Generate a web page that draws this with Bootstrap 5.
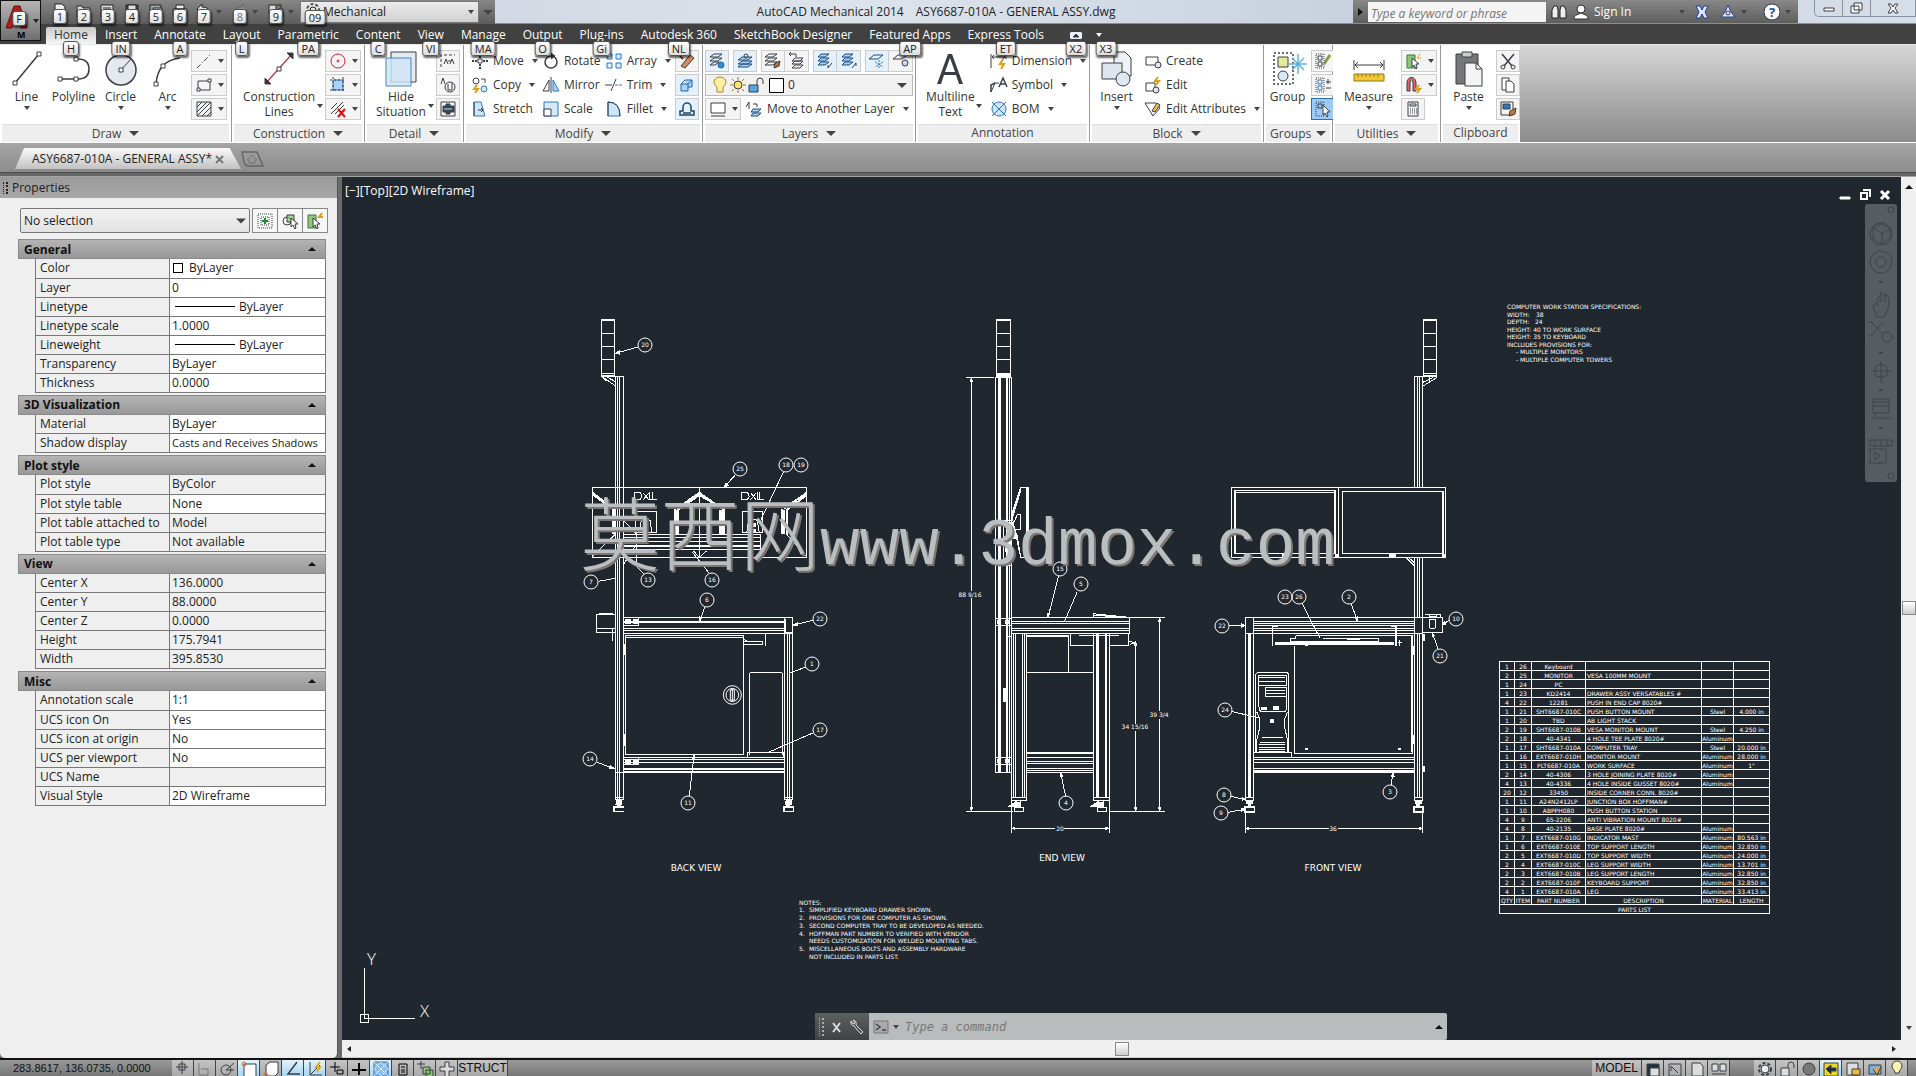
<!DOCTYPE html>
<html lang="en">
<head>
<meta charset="utf-8">
<meta name="viewport" content="width=device-width, initial-scale=1">
<title>AutoCAD Mechanical 2014 - ASY6687-010A - GENERAL ASSY.dwg</title>
<link href="https://cdn.jsdelivr.net/npm/bootstrap@5.3.0/dist/css/bootstrap.min.css" rel="stylesheet">
<style>
body{font:12px/16px "Open Sans","Noto Sans",sans-serif;color:#333;background:#6b6b6b}
button,input,select{font:inherit;color:inherit}
button{background:none;border:0;padding:0}
a{color:inherit;text-decoration:none}
svg{fill:none;stroke:#3a3e44;stroke-width:1;flex:none}
.ic{width:18px;height:18px}
.lg{width:38px;height:38px}
.dn{width:0;height:0;border:3px solid transparent;border-top:4px solid #444;border-bottom:0;flex:none}
.dn.wide{border-width:5px;border-top:5px solid #444;border-bottom:0}
.keytip{position:absolute;left:50%;transform:translateX(-50%);min-width:12px;height:15px;padding:0 3px;background:linear-gradient(#fff,#dcdcdc);border:1px solid #555;border-radius:3px;box-shadow:1px 2px 2px #0009;font-size:11px;line-height:13px;color:#222;text-align:center;z-index:5}
/* title bar */
.titlebar{height:24px;background:linear-gradient(90deg,#c3ccda,#dde3eb 45%,#c8d2df 70%,#d6dee8);border-bottom:1px solid #8a8f96}
.qat{background:linear-gradient(#868686,#5c5c5c);padding-left:48px;height:24px}
.qat button{width:24px;height:24px;position:relative}
.qat .keytip,.combo-wrap .keytip{top:9px}
.qat svg{stroke:#222;margin-top:-2px}
.qat .more{width:12px}
.combo-wrap{position:relative;width:179px;height:22px}
.combo-wrap select{appearance:none;width:100%;height:22px;padding:0 22px;border:1px solid #777;background:linear-gradient(#ececec,#cfcfcf);color:#222}
.combo-wrap .dn{position:absolute;right:5px;top:9px}
.appbtn{position:absolute;left:0;top:0;width:41px;height:41px;border:1px solid #111;background:linear-gradient(#b5b5b5,#6f6f6f);z-index:6}
.infobar{background:linear-gradient(#888,#5e5e5e);color:#fff;height:23px;width:445px}
.infobar input{width:178px;height:20px;border:0;background:#f4f4f4;font-style:italic;padding:4px 3px 0;color:#555}
.winbtns{width:102px;height:17px;margin-left:16px;border:1px solid #8791a0;border-top:0;border-radius:0 0 0 5px}
.winbtns button{border-right:1px solid #8791a0;width:28px;height:16px;line-height:0}
.winbtns button:last-child{flex:1;border:0}
/* menu tabs */
.menubar{height:20px;background:#414141;color:#fff;padding-left:46px;gap:1px}
.menubar .tab-link{position:relative;padding:2px 8px 0;line-height:18px;height:20px;color:#fff}
.menubar .tab-link.active{background:linear-gradient(#c9c9c9,#f5f5f5);color:#333;margin-top:3px;height:17px;padding-top:0;line-height:16px;border-radius:2px 2px 0 0}
.menubar .keytip{top:17px}
.menubar .active .keytip{top:14px}
/* ribbon */
.ribbon{height:99px;background:linear-gradient(#d6d6d6,#8b8b8b);border-bottom:1px solid #fff;border-top:1px solid #e8e8e8}
.panel{background:#fff;border-right:1px solid #999;height:97px;flex:none}
.panel-body{height:79px;padding:5px 3px 0}
.panel-name{height:18px;background:#eee;border-top:1px solid #ddd;margin:0 2px;color:#444}
.p-draw{width:232px}.p-cons{width:133px}.p-det{width:99px}.p-mod{width:239px}.p-lay{width:213px}.p-ann{width:174px}.p-blk{width:174px}.p-grp{width:69px}.p-uti{width:108px}.p-clp{width:79px}
.big{min-width:47px;height:72px;display:flex;flex-direction:column;align-items:center;position:relative;line-height:15px}
.big svg{margin-bottom:1px}
.big .dn{margin-top:2px}
.big.two{padding:0 8px}
.big.two .dn{position:absolute;right:0;top:52px}
.smallcol{display:flex;flex-direction:column;gap:2px}
.sb{width:24px;height:22px;border:1px solid #ccc;background:#f4f4f4;display:flex;align-items:center;justify-content:center}
.sb.split{width:36px;justify-content:space-around}
.sb.on{background:#9ccbf7;border-color:#2d6fb0}
.sb.blue{background:#e4f0fb}
.sb+.sb.join{border-left:0}
.tb{height:22px;display:flex;align-items:center;gap:4px;white-space:nowrap}
.tb .dn{margin-left:4px}
.laysel{width:208px;height:22px;border:1px solid #bbb;background:#f1f1f1;padding:0 5px}
.docs{height:29px;background:linear-gradient(#a5a5a5,#8c8c8c);padding-bottom:3px}
.doctab{margin-left:15px;width:226px;height:21px;background:linear-gradient(#fafafa,#c2c2c2);clip-path:polygon(0 100%,4% 0,95% 0,100% 100%);padding:0 17px;color:#222}
.strip{height:5px;background:#666;border-top:1px solid #4c4c4c;border-bottom:1px solid #a5a5a5}
/* properties palette */
.palette{width:338px;background:#efefef;border-right:1px solid #555;border-radius:0 0 5px 5px;color:#222}
.palette-title{height:21px;background:linear-gradient(#9b9b9b,#a6a6a6);padding-left:3px;gap:4px}
.grip{width:5px;height:12px;border:dotted #222;border-width:0 2px 0 1px;flex:none}
.grip.pale{border-color:#aaa;height:18px}
.selrow{padding:10px 9px 6px 20px;gap:3px}
.selrow select{appearance:none;flex:1;height:25px;border:1px solid #777;border-radius:2px;background:linear-gradient(#f2f2f2,#e2e2e2);padding:0 3px}
.selrow .pb{width:26px;height:25px;border:1px solid #888;background:#f6f6f6;margin-left:-1px}
.sec{margin:0 11px 2px 18px}
.sec-head{width:100%;height:20px;background:linear-gradient(#b4b4b4,#989898);border:1px solid #8a8a8a;font-weight:700;padding:0 9px 0 5px;line-height:17px;color:#111}
.up{width:0;height:0;border:4px solid transparent;border-bottom:4px solid #111;border-top:0}
.props{margin-left:17px;width:291px;table-layout:fixed}
.props th,.props td{height:19px;border:1px solid #777;padding:0 2px;font-weight:400;line-height:18px;overflow:hidden;white-space:nowrap}
.props th{width:134px;padding-left:4px}
.props td{background:#fff}
.props td.ro{background:#efefef}
.props td.long{font-size:11px}
.props tr:first-child>*{border-top:0}
.swatch{display:inline-block;width:10px;height:10px;border:1px solid #000;background:#fff;margin:0 6px 0 1px;vertical-align:-1px}
.lt{display:inline-block;width:60px;border-top:1px solid #000;margin:0 4px 0 3px;vertical-align:4px}
/* canvas */
.canvas{background:#21272e;position:relative;overflow:hidden}
.drawing{width:100%;height:100%;display:block;stroke:#fff}
.drawing .ln{shape-rendering:crispEdges}
.drawing .ln *{vector-effect:non-scaling-stroke}
.drawing .ln .heavy{stroke-width:2}
.drawing text{fill:#fff;stroke:none;font:6px "DejaVu Sans",sans-serif}
.drawing .mid{text-anchor:middle}
.drawing .vname{font-size:9px;text-anchor:middle}
.drawing .axis{font-size:17px;font-family:"Open Sans",sans-serif;font-weight:300}
.drawing .wm{font:66px "Liberation Mono","Noto Sans CJK SC",monospace;fill:#b9bec0;filter:drop-shadow(2px 2px 0 #7d7672)}
.drawing .wm .han{font:300 80px "Noto Sans CJK SC",sans-serif;fill:#b9bec0}
.viewlabel{position:absolute;left:3px;top:6px;color:#fff}
.mdi{position:absolute;right:10px;top:9px;gap:8px}
.navbar3d{position:absolute;right:4px;top:27px;width:32px;height:278px;background:#565c60;border-radius:3px}
.navbar3d svg{stroke:#3e454a;display:block}
.parts{position:absolute;right:131px;top:484px;width:270px;table-layout:fixed;color:#fff;font:6px/7px "DejaVu Sans",sans-serif}
.parts th,.parts td{border:1px solid #fff;height:9px;padding:0;text-align:center;font-weight:400;white-space:nowrap;overflow:hidden}
.parts td:nth-child(4){text-align:left;padding-left:1px}
.cmd{position:absolute;left:473px;bottom:0;width:632px;height:27px;background:#b9bcbc;border-radius:2px}
.cmd-l{width:54px;background:linear-gradient(#5d5f60,#3f4142)}
.cmd input{flex:1;border:0;background:none;font:italic 12px "DejaVu Sans Mono",monospace;outline:0}
.cmd input::placeholder{color:#777;opacity:1}
.hscroll{height:18px;background:#f0f0f0;border-bottom:1px solid #ccc}
.vscroll{width:15px;background:#f0f0f0}
.thumb{background:linear-gradient(#fff,#ccc);border:1px solid #888;width:14px;height:14px}
/* status bar */
.status{height:18px;border-top:2px solid #111;background:linear-gradient(#9a9a9a,#777);overflow:hidden;color:#111;align-items:flex-start}
.status .coords{width:172px;padding:1px 0 0 13px;font:11px/14px "Liberation Sans",sans-serif}
.status button{width:22px;height:18px;background:linear-gradient(#c4c4c4,#a5a5a5);border-right:1px solid #444;flex:none;display:block;line-height:0}
.status button svg{margin:0 auto;display:block}
.status button.on{background:linear-gradient(#e4f4fc,#9fd2ee)}
.status button.word{width:50px;height:16px;font:12px/16px "Liberation Sans",sans-serif}
</style>
</head>
<body class="vh-100 d-flex flex-column overflow-hidden">
<header class="position-relative">
 <div class="titlebar d-flex justify-content-between align-items-start">
  <button class="appbtn" aria-label="Application menu"><svg width="39" height="39" viewBox="0 0 39 39"><path d="M5 27L13 5h6l7 22h-6L16 13l-5 14z" fill="#b01c1c" stroke="#6d0d0d"/><path d="M32 18h6l-3 4z" fill="#222" stroke="none"/><text x="16" y="37" fill="#000" stroke="none" font-size="9" font-weight="700">M</text></svg><span class="keytip" style="left:18px;top:10px">F</span></button>
  <div class="qat d-flex align-items-center">
   <button aria-label="New"><svg class="ic" viewBox="0 0 18 18"><path d="M4 2h7l3 3v11H4z" fill="#eee"/></svg><span class="keytip">1</span></button>
   <button aria-label="Open"><svg class="ic" viewBox="0 0 18 18"><path d="M2 4h5l1 2h7v9H2z" fill="#ddd"/></svg><span class="keytip">2</span></button>
   <button aria-label="Open from cloud"><svg class="ic" viewBox="0 0 18 18"><path d="M2 3h12v12H2z" fill="#ddd"/><path d="M4 6h8"/></svg><span class="keytip">3</span></button>
   <button aria-label="Save"><svg class="ic" viewBox="0 0 18 18"><path d="M3 3h12v12H3z" fill="#49516b"/><path d="M5 3h8v5H5z" fill="#ddd"/></svg><span class="keytip">4</span></button>
   <button aria-label="Save as"><svg class="ic" viewBox="0 0 18 18"><path d="M3 3h11v11H3z" fill="#9aa"/><path d="M6 6h9v9H6z" fill="#ccd"/></svg><span class="keytip">5</span></button>
   <button aria-label="Plot"><svg class="ic" viewBox="0 0 18 18"><path d="M5 3h8v4H5zM2 7h14v6H2z" fill="#eee"/></svg><span class="keytip">6</span></button>
   <button aria-label="Undo"><svg class="ic" viewBox="0 0 18 18"><path d="M2 7l5-5v3c6 0 8 3 8 8-2-3-4-4-8-4v3z" fill="#ddd"/></svg><span class="keytip">7</span></button>
   <button class="more" aria-label="Undo list"><span class="dn d-block"></span></button>
   <button aria-label="Redo"><svg class="ic" viewBox="0 0 18 18"><path d="M16 7l-5-5v3C5 5 3 8 3 13c2-3 4-4 8-4v3z" fill="#888" stroke="#666"/></svg><span class="keytip text-secondary">8</span></button>
   <button class="more" aria-label="Redo list"><span class="dn d-block"></span></button>
   <button aria-label="Workspace tools"><svg class="ic" viewBox="0 0 18 18"><path d="M2 3h7v8H2zM11 7h5v8h-5z" fill="#ddd"/><path d="M10 3h4v3"/></svg><span class="keytip">9</span></button>
   <button class="more" aria-label="More"><span class="dn d-block"></span></button>
   <div class="combo-wrap"><select aria-label="Workspace"><option>Mechanical</option></select><svg class="ic position-absolute start-0 top-0 ms-1 mt-0" viewBox="0 0 18 18"><circle cx="9" cy="9" r="6" stroke-dasharray="3 2" stroke-width="2" stroke="#555"/><circle cx="9" cy="9" r="3"/></svg><span class="keytip" style="left:15px">09</span><span class="dn"></span></div>
   <button class="more ms-1" aria-label="Customize toolbar"><span class="dn wide d-block"></span></button>
  </div>
  <div class="d-flex flex-grow-1 justify-content-center text-dark pt-1 ps-4"><span>AutoCAD Mechanical 2014</span><span class="ms-2 ps-1">ASY6687-010A - GENERAL ASSY.dwg</span></div>
  <div class="infobar d-flex align-items-center">
   <button class="px-1" aria-label="Collapse"><svg width="7" height="10" viewBox="0 0 7 10"><path d="M1 1l5 4-5 4z" fill="#111" stroke="none"/></svg></button>
   <input type="text" placeholder="Type a keyword or phrase" aria-label="Search">
   <button class="ms-1" aria-label="Find"><svg class="ic" viewBox="0 0 18 18"><path d="M2 15V7l2-4h3l1 4v8zM10 15V7l1-4h3l2 4v8z" fill="#eee" stroke="#222"/></svg></button>
   <button class="d-flex align-items-center gap-1 ms-1"><svg class="ic" viewBox="0 0 18 18"><circle cx="9" cy="6" r="4" fill="#fff" stroke="#333"/><path d="M2 16c0-4 3-4 7-6 4 2 7 2 7 6z" fill="#fff" stroke="#333"/></svg><span>Sign In</span></button>
   <button class="ms-5" aria-label="Account menu"><span class="dn d-block"></span></button>
   <button class="ms-2" aria-label="Exchange"><svg class="ic" viewBox="0 0 18 18"><path d="M3 3h4l2 4 2-4h4l-3 6 3 6h-4l-2-4-2 4H3l3-6z" fill="#dce6ff" stroke="#23408e"/></svg></button>
   <button class="ms-2 d-flex align-items-center gap-1" aria-label="Community"><svg class="ic" viewBox="0 0 18 18"><path d="M9 2l3 7 4 5H2l4-5z" fill="#dce6ff" stroke="#23408e"/><circle cx="9" cy="10" r="2"/></svg><span class="dn"></span></button>
   <button class="ms-3 d-flex align-items-center gap-1" aria-label="Help"><svg class="ic" viewBox="0 0 18 18"><circle cx="9" cy="9" r="8" fill="#fff" stroke="#345"/><text x="6" y="14" fill="#1b4fa0" stroke="none" font-size="13" font-weight="700">?</text></svg><span class="dn"></span></button>
  </div>
  <div class="winbtns d-flex"><button aria-label="Minimize"><svg width="12" height="12" viewBox="0 0 12 12"><path d="M1 6h10v3H1z" fill="#fff"/></svg></button><button aria-label="Restore"><svg width="14" height="12" viewBox="0 0 14 12"><path d="M4 1h8v7H4zM1 4h8v7H1z" fill="#fff"/></svg></button><button aria-label="Close"><svg width="12" height="11" viewBox="0 0 12 11"><path d="M1 1h3l2 3 2-3h3L8 5l3 5H8L6 7l-2 3H1l3-5z" fill="#fff"/></svg></button></div>
 </div>
 <nav class="menubar d-flex">
  <a href="#" class="tab-link active">Home<span class="keytip">H</span></a><a href="#" class="tab-link">Insert<span class="keytip">IN</span></a><a href="#" class="tab-link">Annotate<span class="keytip">A</span></a><a href="#" class="tab-link">Layout<span class="keytip">L</span></a><a href="#" class="tab-link">Parametric<span class="keytip">PA</span></a><a href="#" class="tab-link">Content<span class="keytip">C</span></a><a href="#" class="tab-link">View<span class="keytip">VI</span></a><a href="#" class="tab-link">Manage<span class="keytip">MA</span></a><a href="#" class="tab-link">Output<span class="keytip">O</span></a><a href="#" class="tab-link">Plug-ins<span class="keytip">Gi</span></a><a href="#" class="tab-link">Autodesk 360<span class="keytip">NL</span></a><a href="#" class="tab-link">SketchBook Designer</a><a href="#" class="tab-link">Featured Apps<span class="keytip">AP</span></a><a href="#" class="tab-link">Express Tools<span class="keytip">ET</span></a>
  <button class="tab-link ms-2" aria-label="Minimize ribbon"><svg width="14" height="9" viewBox="0 0 14 9"><rect x=".5" y=".5" width="13" height="8" rx="2" fill="#eef"/><path d="M4 6l3-3 3 3z" fill="#333"/></svg><span class="keytip">X2</span></button>
  <button class="tab-link px-1" aria-label="Ribbon options"><span class="dn d-block" style="border-top-color:#fff"></span><span class="keytip" style="left:14px">X3</span></button>
 </nav>
</header>
<section class="ribbon d-flex">
 <div class="panel p-draw"><div class="panel-body d-flex">
  <button class="big"><svg class="lg" viewBox="0 0 38 38"><path d="M7 33L31 4" stroke-width="1.5"/><path d="M5 31h4v4H5zM29 2h4v4h-4z" fill="#fff"/></svg>Line<span class="dn"></span></button>
  <button class="big"><svg class="lg" viewBox="0 0 38 38"><path d="M5 29h18q11 0 11-10T23 9h-2" stroke-width="1.5"/><path d="M3 27h4v4H3zM19 27h4v4h-4zM19 7h4v4h-4z" fill="#fff"/></svg>Polyline</button>
  <button class="big"><svg class="lg" viewBox="0 0 38 38"><circle cx="19" cy="20" r="15" fill="#e4e8ef" stroke-width="1.5"/><path d="M19 20L29 9"/><path d="M17 18h4v4h-4z" fill="#fff"/></svg>Circle<span class="dn"></span></button>
  <button class="big"><svg class="lg" viewBox="0 0 38 38"><path d="M7 34C8 20 14 10 31 8" stroke-width="1.5"/><path d="M5 32h4v4H5zM12 14h4v4h-4z" fill="#fff"/></svg>Arc<span class="dn"></span></button>
  <div class="smallcol"><button class="sb split" aria-label="Centerline"><svg class="ic" viewBox="0 0 18 18"><path d="M2 16L16 2" stroke-dasharray="5 2 1 2"/></svg><span class="dn"></span></button><button class="sb split" aria-label="Rectangle"><svg class="ic" viewBox="0 0 18 18"><path d="M3 5h12v9H3z"/><path d="M2 12h3v3H2zM13 3h3v3h-3z" fill="#fff"/></svg><span class="dn"></span></button><button class="sb split" aria-label="Hatch"><svg class="ic" viewBox="0 0 18 18"><path d="M2 2h14v14H2zM2 7l5-5M2 12L12 2M2 16L16 2M7 16l9-9M12 16l4-4"/></svg><span class="dn"></span></button></div>
 </div><div class="panel-name d-flex justify-content-center align-items-center gap-2">Draw<span class="dn wide"></span></div></div>
 <div class="panel p-cons"><div class="panel-body d-flex justify-content-between">
  <button class="big two"><svg class="lg" viewBox="0 0 38 38"><path d="M6 33L32 4" stroke="#b2474f" stroke-width="1.5"/><path d="M5 34v-6l6 6zM33 3v6l-6-6z" fill="#333"/><path d="M17 17h4v4h-4z" fill="#fff"/></svg>Construction<br>Lines<span class="dn"></span></button>
  <div class="smallcol"><button class="sb split" aria-label="Construction circle"><svg class="ic" viewBox="0 0 18 18"><circle cx="9" cy="9" r="7" stroke="#c23"/><circle cx="9" cy="9" r="1" stroke="#c23"/></svg><span class="dn"></span></button><button class="sb split" aria-label="Auto construction"><svg class="ic" viewBox="0 0 18 18"><path d="M4 4h10v10H4z" fill="#a9d2f5" stroke="#2b77c0"/><path d="M1 4h16M4 1v16M14 1v16M1 14h16" stroke-dasharray="2 2"/></svg><span class="dn"></span></button><button class="sb split" aria-label="Erase construction"><svg class="ic" viewBox="0 0 18 18"><path d="M2 14L14 2M2 9l6-6M6 14l9-9"/><path d="M9 9l7 8M16 9l-7 8" stroke="#d11" stroke-width="2"/></svg><span class="dn"></span></button></div>
 </div><div class="panel-name d-flex justify-content-center align-items-center gap-2">Construction<span class="dn wide"></span></div></div>
 <div class="panel p-det"><div class="panel-body d-flex justify-content-between">
  <button class="big two"><svg class="lg" viewBox="0 0 38 38"><path d="M9 2h25v30H9z" fill="#e3eaf2"/><path d="M4 8h25v28H4z" fill="#cfe3f5" fill-opacity=".8" stroke="#4a86bd"/></svg>Hide<br>Situation<span class="dn"></span></button>
  <div class="smallcol"><button class="sb" aria-label="Section"><svg class="ic" viewBox="0 0 18 18"><path d="M2 15V3h14" stroke-dasharray="3 2"/><path d="M5 12l2-5 2 5M11 12l2-5 2 5M9 9h3"/></svg></button><button class="sb" aria-label="Detail view"><svg class="ic" viewBox="0 0 18 18"><circle cx="11" cy="11" r="5"/><path d="M2 8l2-6 2 6M9 8v6h4V7"/></svg></button><button class="sb" aria-label="Breakout"><svg class="ic" viewBox="0 0 18 18"><path d="M2 2h14v14H2z"/><path d="M4 6h3v-2h4v2h4v6h-4v2H7v-2H4z" fill="#345"/><path d="M5 9h8" stroke="#cde"/></svg></button></div>
 </div><div class="panel-name d-flex justify-content-center align-items-center gap-2">Detail<span class="dn wide"></span></div></div>
 <div class="panel p-mod"><div class="panel-body d-flex justify-content-between">
  <div class="smallcol ms-1"><button class="tb"><svg class="ic" viewBox="0 0 18 18"><path d="M9 1v5M9 12v5M1 9h5M12 9h5" stroke-width="2" stroke-dasharray="2 1"/><path d="M7 7h4v4H7z"/></svg>Move<span class="dn"></span></button><button class="tb"><svg class="ic" viewBox="0 0 18 18"><circle cx="5" cy="5" r="3"/><circle cx="13" cy="13" r="3" fill="#cfe6fa" stroke="#2b77c0"/><path d="M10 3h4v4"/><path d="M6 9l-3 4h4l-3 4" stroke="#e79b12" stroke-width="2"/></svg>Copy<span class="dn"></span></button><button class="tb"><svg class="ic" viewBox="0 0 18 18"><path d="M3 2h7l4 14H3z" fill="#cfe6fa" stroke="#2b77c0"/><path d="M3 2v14M7 10h5m-2-2l2 2-2 2"/></svg>Stretch</button></div>
  <div class="smallcol"><button class="tb"><svg class="ic" viewBox="0 0 18 18"><circle cx="9" cy="10" r="6" stroke-width="1.5"/><path d="M9 1l4 3-4 3" fill="#333"/></svg>Rotate</button><button class="tb"><svg class="ic" viewBox="0 0 18 18"><path d="M7 4v11H1z"/><path d="M11 4v11h6z" fill="#a9d2f5" stroke="#2b77c0"/><path d="M9 1v16"/></svg>Mirror</button><button class="tb"><svg class="ic" viewBox="0 0 18 18"><path d="M2 2h14v14H2z" fill="#d5e9fa" stroke="#2b77c0"/><path d="M2 9h7v7H2z" fill="#fff"/></svg>Scale</button></div>
  <div class="smallcol"><button class="tb"><svg class="ic" viewBox="0 0 18 18"><path d="M2 2h5v5H2zM11 2h5v5h-5zM2 11h5v5H2zM11 11h5v5h-5z" fill="#e0effb" stroke="#2b77c0"/></svg>Array<span class="dn"></span></button><button class="tb"><svg class="ic" viewBox="0 0 18 18"><path d="M6 15L11 3M0 9h7"/><path d="M10 9h8" stroke="#2b77c0" stroke-dasharray="3 1"/></svg>Trim<span class="dn"></span></button><button class="tb"><svg class="ic" viewBox="0 0 18 18"><path d="M3 2q12 0 12 14H3z" fill="#cfe6fa" stroke="#2b77c0"/><path d="M3 16V2q12 0 12 14"/></svg>Fillet<span class="dn"></span></button></div>
  <div class="smallcol"><button class="sb" aria-label="Erase"><svg class="ic" viewBox="0 0 18 18"><path d="M3 14L12 3l4 3-9 10z" fill="#d88a62"/><path d="M1 3l4 4" stroke="#c22" stroke-width="2"/></svg></button><button class="sb blue" aria-label="Explode"><svg class="ic" viewBox="0 0 18 18"><path d="M3 8h7v7H3zM7 4h7v7h-4M3 8l4-4M10 8l4-4" fill="#a9d2f5" stroke="#1f64a8"/></svg></button><button class="sb blue" aria-label="Offset"><svg class="ic" viewBox="0 0 18 18"><path d="M2 15h14v-4h-3V7a4 4 0 0 0-8 0v4H2zM5 13h8" stroke-width="1.5" stroke="#1f4468"/></svg></button></div>
 </div><div class="panel-name d-flex justify-content-center align-items-center gap-2">Modify<span class="dn wide"></span></div></div>
 <div class="panel p-lay"><div class="panel-body px-0 d-flex justify-content-center"><div class="smallcol">
  <div class="d-flex justify-content-between">
   <button class="sb blue" aria-label="Layer properties"><svg class="ic" viewBox="0 0 18 18"><path d="M6 2h8l-4 3H2zM6 6h8l-4 3H2zM6 10h5l-4 3H2z"/><circle cx="13" cy="13" r="3" fill="#3a8ad0" stroke="#1f64a8"/></svg></button>
   <button class="sb blue" aria-label="Layer match"><svg class="ic" viewBox="0 0 18 18"><path d="M6 5h10l-4 3H2zM6 9h10l-4 3H2zM6 12h10l-4 3H2z" fill="#a9d2f5" stroke="#1f4d80"/><circle cx="10" cy="4" r="2"/></svg></button>
   <div class="d-flex"><button class="sb" aria-label="Make current"><svg class="ic" viewBox="0 0 18 18"><path d="M5 2h8l-4 3H1zM5 6h8l-4 3H1zM5 10h8l-4 3H1z"/><path d="M10 16l1-5 5-2-1 5z" fill="#b5722a"/></svg></button><button class="sb join" aria-label="Previous layer"><svg class="ic" viewBox="0 0 18 18"><path d="M7 6h8l-3 3H4zM7 9h8l-3 3H4zM7 13h8l-3 3H4zM1 2h7v3M1 2l2-2M1 2l2 2"/></svg></button></div>
   <div class="d-flex"><button class="sb blue" aria-label="Isolate"><svg class="ic" viewBox="0 0 18 18"><path d="M5 2h8l-4 3H2zM5 6h8l-4 3H2zM5 10h8l-4 3H2z" fill="#a9d2f5" stroke="#1f4d80"/><path d="M16 11l-4 5v-3"/></svg></button><button class="sb join blue" aria-label="Unisolate"><svg class="ic" viewBox="0 0 18 18"><path d="M5 2h8l-4 3H2zM5 6h8l-4 3H2zM5 10h8l-4 3H2z" fill="#a9d2f5" stroke="#1f4d80"/><path d="M12 16l4-5v3"/></svg></button></div>
   <div class="d-flex"><button class="sb blue" aria-label="Freeze"><svg class="ic" viewBox="0 0 18 18"><path d="M6 3h9l-5 4H1z" stroke="#1f4d80"/><path d="M11 8v9M7 10l8 5M15 10l-8 5" stroke="#2b77c0" stroke-dasharray="2 1"/></svg></button><button class="sb join" aria-label="Layer off"><svg class="ic" viewBox="0 0 18 18"><path d="M6 3h9l-5 4H1z"/><circle cx="13" cy="11" r="3" fill="#c9d8f5"/></svg></button></div>
  </div>
  <button class="laysel d-flex align-items-center"><svg class="ic" viewBox="0 0 18 18"><path d="M6 12c0-2-3-3-3-6a6 5 0 0 1 12 0c0 3-3 4-3 6v4H6z" fill="#fff0a0" stroke="#a8862a"/></svg><svg class="ic" viewBox="0 0 18 18"><circle cx="9" cy="9" r="4" fill="#fbe373"/><path d="M9 1v3M9 14v3M1 9h3M14 9h3M3 3l2 2M13 13l2 2M3 15l2-2M13 5l2-2" stroke="#a67b12"/></svg><svg class="ic" viewBox="0 0 18 18"><path d="M2 9h9v7H2z" fill="#58a5e0"/><path d="M10 9V5a3 3 0 0 1 6 0v3"/></svg><svg class="ms-1" width="15" height="15" viewBox="0 0 15 15"><path d="M.5.5h14v14H.5z" fill="#fff" stroke="#000"/></svg><span class="ms-1">0</span><span class="dn wide ms-auto"></span></button>
  <div class="d-flex gap-1"><button class="sb split" aria-label="Layer group"><svg class="ic" viewBox="0 0 18 18"><path d="M2 3h14v10H2zM2 16h14" fill="#fff"/></svg><span class="dn"></span></button><button class="tb"><svg class="ic" viewBox="0 0 18 18"><path d="M1 7l3-5v7M8 4h4v3"/><path d="M8 9h8l-3 3H6zM8 13h8l-3 3H6z" fill="#a9d2f5" stroke="#1f4d80"/></svg>Move to Another Layer<span class="dn"></span></button></div>
 </div></div><div class="panel-name d-flex justify-content-center align-items-center gap-2">Layers<span class="dn wide"></span></div></div>
 <div class="panel p-ann"><div class="panel-body d-flex gap-2">
  <button class="big two"><svg class="lg" viewBox="0 0 38 38"><path d="M6 34L17 4h4l11 30h-4l-3-9H13l-3 9zM14 22h10L19 8z" fill="#3a3e44" fill-rule="evenodd" stroke="none"/></svg>Multiline<br>Text<span class="dn"></span></button>
  <div class="smallcol"><button class="tb"><svg class="ic" viewBox="0 0 18 18"><path d="M1 2v14M16 2v5M2 5h13M4 3L2 5l2 2M13 3l2 2-2 2"/><path d="M13 7l-3 5h4l-3 5" stroke="#e79b12" stroke-width="2"/></svg>Dimension<span class="dn"></span></button><button class="tb"><svg class="ic" viewBox="0 0 18 18"><path d="M1 16V9l4-2M9 11l4-9 4 9M10 8h5" stroke-width="1.5"/><path d="M1 16l4-9h4"/></svg>Symbol<span class="dn"></span></button><button class="tb"><svg class="ic" viewBox="0 0 18 18"><circle cx="9" cy="9" r="7" fill="#cfe6fa" stroke="#2b77c0"/><path d="M2 2l14 14M16 2L2 16" stroke="#2b77c0"/></svg>BOM<span class="dn"></span></button></div>
 </div><div class="panel-name text-center">Annotation</div></div>
 <div class="panel p-blk"><div class="panel-body d-flex">
  <button class="big"><svg class="lg" viewBox="0 0 38 38"><path d="M16 2h11l6 6v18H16z" fill="#eef1f5"/><path d="M4 13h20v16H4z" fill="#dfe5ec"/><circle cx="25" cy="29" r="7" fill="#dfe8f2"/></svg>Insert<span class="dn"></span></button>
  <div class="smallcol ms-1"><button class="tb"><svg class="ic" viewBox="0 0 18 18"><path d="M2 5h12v8H2z"/><circle cx="14" cy="13" r="3" fill="#dfe5ec"/></svg>Create</button><button class="tb"><svg class="ic" viewBox="0 0 18 18"><path d="M2 7h9v8H2z"/><circle cx="12" cy="14" r="3" fill="#dfe5ec"/><path d="M14 1l-3 4h4l-3 4" stroke="#e79b12" stroke-width="2"/></svg>Edit</button><button class="tb"><svg class="ic" viewBox="0 0 18 18"><path d="M1 3l8 13 7-8-4-5z"/><path d="M8 11l5-8 3 2-5 7z" fill="#f1c14c"/></svg>Edit Attributes<span class="dn"></span></button></div>
 </div><div class="panel-name d-flex justify-content-center align-items-center gap-2">Block<span class="dn wide"></span></div></div>
 <div class="panel p-grp"><div class="panel-body px-0 d-flex justify-content-between">
  <button class="big"><svg class="lg" viewBox="0 0 38 38"><path d="M5 3h19v31H5z" stroke-dasharray="2 2" stroke-width="1.5"/><path d="M9 7h10v10H9z" fill="#e4ea9c"/><circle cx="14" cy="26" r="5" fill="#d6e9f8"/><path d="M29 4v20M20 14h18M23 8l12 12M35 8L23 20" stroke="#5fb3ea" stroke-width="1.5"/></svg>Group</button>
  <div class="smallcol"><button class="sb" aria-label="Group edit"><svg class="ic" viewBox="0 0 18 18"><path d="M2 2h8v14H2z" stroke-dasharray="1 1"/><path d="M4 4h4v4H4zM4 10h4v4H4z"/><path d="M10 12l6-9" stroke="#8a9a4a" stroke-width="3"/></svg></button><button class="sb" aria-label="Add or remove"><svg class="ic" viewBox="0 0 18 18"><path d="M2 2h8v14H2z" stroke-dasharray="1 1"/><path d="M4 4h4v4H4zM4 10h4v4H4z" stroke="#2b77c0"/><path d="M12 6h5M14 3v5M12 12h5"/></svg></button><button class="sb on" aria-label="Group selection"><svg class="ic" viewBox="0 0 18 18"><path d="M2 2h8v14H2z" stroke-dasharray="1 1"/><path d="M4 4h4v4H4z"/><path d="M9 5v10l2-2 2 4 1-1-1-4h3z" fill="#fff"/></svg></button></div>
 </div><div class="panel-name px-1 d-flex justify-content-between align-items-center">Groups<span class="dn wide"></span></div></div>
 <div class="panel p-uti"><div class="panel-body d-flex justify-content-between">
  <button class="big flex-fill"><svg class="lg" viewBox="0 0 38 38"><path d="M4 10v10M34 10v10M5 15h28M8 12l-3 3 3 3M30 12l3 3-3 3"/><path d="M4 24h30v7H4z" fill="#f0c932" stroke="#94761a"/><path d="M8 24v3M12 24v3M16 24v3M20 24v3M24 24v3M28 24v3" stroke="#94761a"/></svg>Measure<span class="dn"></span></button>
  <div class="smallcol"><button class="sb split" aria-label="Quick select"><svg class="ic" viewBox="0 0 18 18"><path d="M2 3h8v13H2z" fill="#8cc878" stroke="#3c7a35"/><path d="M7 6v9l2-2 2 4 1-1-1-4h3z" fill="#fff"/><path d="M15 2l-3 4h4" stroke="#e79b12"/></svg><span class="dn"></span></button><button class="sb split" aria-label="Power snap"><svg class="ic" viewBox="0 0 18 18"><path d="M2 15V7a4 5 0 0 1 9 0v8H8V7a1 2 0 0 0-3 0v8z" fill="#d66"/><path d="M14 9l-3 4h4l-3 4" stroke="#e79b12" stroke-width="2"/></svg><span class="dn"></span></button><button class="sb" aria-label="Calculator"><svg class="ic" viewBox="0 0 18 18"><path d="M4 2h10v14H4zM6 4h6v2H6z"/><path d="M6 9h7M6 11h7M6 13h7" stroke-dasharray="1 1"/></svg></button></div>
 </div><div class="panel-name d-flex justify-content-center align-items-center gap-2">Utilities<span class="dn wide"></span></div></div>
 <div class="panel p-clp border-0"><div class="panel-body px-0 d-flex justify-content-between">
  <button class="big flex-fill"><svg class="lg" viewBox="0 0 38 38"><path d="M6 4h22v30H6z" fill="#777"/><path d="M12 2h10v5H12z" fill="#ccc"/><path d="M15 13h11l6 6v17H15z" fill="#f4f4f4"/><path d="M26 13v6h6"/></svg>Paste<span class="dn"></span></button>
  <div class="smallcol"><button class="sb" aria-label="Cut"><svg class="ic" viewBox="0 0 18 18"><path d="M3 2l10 12M15 2L5 14" stroke-width="1.5"/><circle cx="4" cy="15" r="2"/><circle cx="14" cy="15" r="2"/></svg></button><button class="sb" aria-label="Copy clip"><svg class="ic" viewBox="0 0 18 18"><path d="M3 2h7v12H3z" fill="#fff"/><path d="M7 5h5l3 3v8H7z" fill="#fff"/></svg></button><button class="sb" aria-label="Match properties"><svg class="ic" viewBox="0 0 18 18"><path d="M2 2h12v13H2z"/><path d="M4 4h7v5H4z" fill="#2b77c0"/><path d="M10 16l1-5 6-3-1 6z" fill="#c97835"/></svg></button></div>
 </div><div class="panel-name text-center">Clipboard</div></div>
</section>
<div class="docs d-flex align-items-end"><div class="doctab d-flex align-items-center justify-content-between"><span>ASY6687-010A - GENERAL ASSY*</span><button aria-label="Close drawing"><svg width="9" height="9" viewBox="0 0 9 9"><path d="M1 1l7 7M8 1L1 8" stroke="#777" stroke-width="2"/></svg></button></div><button aria-label="New tab"><svg width="24" height="20" viewBox="0 0 24 20"><path d="M1 3h15l6 14H8q-4 0-5-4z" stroke="#666" stroke-width="1.5"/><path d="M8 14v-3h-2l5-5 5 5h-2v3z" stroke="#777"/></svg></button></div>
<div class="strip"></div>
<main class="d-flex flex-grow-1" style="min-height:0">
 <aside class="palette flex-shrink-0 me-1">
  <div class="palette-title d-flex align-items-center"><span class="grip"></span>Properties</div>
  <div class="selrow d-flex"><div class="position-relative d-flex flex-grow-1"><select aria-label="Selection"><option>No selection</option></select><span class="dn wide position-absolute top-50 end-0 me-1 translate-middle-y"></span></div>
   <div class="d-flex"><button class="pb" aria-label="Toggle PICKADD"><svg class="ic" viewBox="0 0 18 18"><path d="M2 2h14v14H2z" stroke-dasharray="1 1"/><path d="M5 5h8v8H5z" stroke-dasharray="1 1"/><path d="M9 6v6M6 9h6" stroke="#1b8a2a" stroke-width="2"/></svg></button><button class="pb" aria-label="Select objects"><svg class="ic" viewBox="0 0 18 18"><circle cx="6" cy="9" r="4"/><path d="M6 3h7v7H6z" fill="#8cc878" fill-opacity=".7"/><path d="M10 6v9l2-2 2 4 1-1-1-4h3z" fill="#fff"/></svg></button><button class="pb" aria-label="Quick select"><svg class="ic" viewBox="0 0 18 18"><path d="M2 3h8v13H2z" fill="#8cc878" stroke="#3c7a35"/><path d="M7 6v9l2-2 2 4 1-1-1-4h3z" fill="#fff"/><path d="M16 1l-3 4h4" stroke="#e79b12" stroke-width="2"/></svg></button></div></div>
  <div class="sec"><button class="sec-head d-flex justify-content-between align-items-center">General<span class="up"></span></button><table class="props"><tr><th>Color</th><td><span class="swatch"></span>ByLayer</td></tr><tr><th>Layer</th><td>0</td></tr><tr><th>Linetype</th><td><span class="lt"></span>ByLayer</td></tr><tr><th>Linetype scale</th><td>1.0000</td></tr><tr><th>Lineweight</th><td><span class="lt"></span>ByLayer</td></tr><tr><th>Transparency</th><td>ByLayer</td></tr><tr><th>Thickness</th><td>0.0000</td></tr></table></div>
  <div class="sec"><button class="sec-head d-flex justify-content-between align-items-center">3D Visualization<span class="up"></span></button><table class="props"><tr><th>Material</th><td>ByLayer</td></tr><tr><th>Shadow display</th><td class="long">Casts and Receives Shadows</td></tr></table></div>
  <div class="sec"><button class="sec-head d-flex justify-content-between align-items-center">Plot style<span class="up"></span></button><table class="props"><tr><th>Plot style</th><td class="ro">ByColor</td></tr><tr><th>Plot style table</th><td>None</td></tr><tr><th>Plot table attached to</th><td class="ro">Model</td></tr><tr><th>Plot table type</th><td class="ro">Not available</td></tr></table></div>
  <div class="sec"><button class="sec-head d-flex justify-content-between align-items-center">View<span class="up"></span></button><table class="props"><tr><th>Center X</th><td class="ro">136.0000</td></tr><tr><th>Center Y</th><td class="ro">88.0000</td></tr><tr><th>Center Z</th><td class="ro">0.0000</td></tr><tr><th>Height</th><td class="ro">175.7941</td></tr><tr><th>Width</th><td class="ro">395.8530</td></tr></table></div>
  <div class="sec"><button class="sec-head d-flex justify-content-between align-items-center">Misc<span class="up"></span></button><table class="props"><tr><th>Annotation scale</th><td>1:1</td></tr><tr><th>UCS icon On</th><td>Yes</td></tr><tr><th>UCS icon at origin</th><td>No</td></tr><tr><th>UCS per viewport</th><td>No</td></tr><tr><th>UCS Name</th><td class="ro"></td></tr><tr><th>Visual Style</th><td>2D Wireframe</td></tr></table></div>
 </aside>
 <div class="d-flex flex-column flex-grow-1" style="min-width:0">
  <div class="canvas flex-grow-1">
   <svg class="drawing" viewBox="342 177 1559 863" preserveAspectRatio="xMinYMin slice">
    <!-- back view -->
    <g class="ln" transform="translate(540 300) scale(.33333 .34435)">
     <path d="M184 56H224V222H184ZM184 59H224M184 97H224M184 134H224M184 172H224M184 214H224M184 219H224M186 222L224 248M198 222L224 236M184 222L200 236"/>
     <path d="M226 222H250V1452H226ZM234 222V1452M240 222V1452M226 1444H250"/>
     <path d="M157 544H800V748H157ZM478 544V748"/>
     <path class="heavy" d="M157 560L220 604M157 564L220 608V680M226 606V680M478 560L410 606M478 566L414 610V680M404 606V680M410 610V680M478 560L546 606M478 566L552 608V680M540 610V680M546 610V680M800 560L732 606M800 566L740 610V680M726 606V680M732 610V680"/>
     <path d="M250 680H662V726H250M250 690H662M250 700H662M250 712H662M250 717H662M287 614H350V676H287ZM607 614H668V676H607ZM298 676L304 640Q318 632 330 640L336 676M620 676L626 640Q640 632 652 640L658 676M158 744L226 680M740 680L798 744M250 640L290 680M290 680V770M262 740L290 712M460 728L478 748L500 728M250 770L262 750"/>
     <path d="M284 558V580H300L306 570L300 558ZM310 560L326 580M310 580L326 560M330 558V580H350M338 558V578M606 558V580H622L628 570L622 558ZM632 560L648 580M632 580L648 560M652 558V580H672M660 558V578"/>
     <path d="M312 648h12v10h-12zM312 666h12v10h-12zM634 648h12v10h-12zM634 666h12v10h-12z" fill="#fff"/>
     <path d="M170 912H226M170 912V966H226M170 954H226M176 909H218M218 954V990"/>
     <path d="M250 922H758M250 934H733M250 937H733M250 954H733M250 960H733M250 969H733M250 922H296V946H250ZM734 922H758V1452H734ZM736 926V966H756M742 969V1452M748 969V1452M734 969H758M734 1444H758"/>
     <path d="M258 928h14v12h-14zM280 928h12v12h-12zM258 1333h14v12h-14zM280 1333h12v12h-12z" fill="#fff"/>
     <path d="M258 975H611V1320H258ZM258 979H611M256 1000V1030M253 1000V1030M253 1260V1295M611 985L624 992M611 992H668V1000H611M676 969V1004"/>
     <path d="M628 1320V1090Q628 1081 638 1081H718Q728 1081 728 1090V1320M622 1314H732V1328M622 1328V1314"/>
     <path d="M250 1328H733M250 1334H733M250 1342H733M250 1360H733M250 1364H733M250 1368H733M226 1372H733M250 1328H296V1350H250Z"/>
     <path d="M230 1454h16v10h-4v8h10v14h-30v-14h10v-8h-4zM738 1454h16v10h-4v8h10v14h-30v-14h10v-8h-4z" fill="#fff"/>
     <path d="M228 1476H250V1483H228ZM736 1476H758V1483H736Z" stroke="#21272e" fill="#21272e"/>
     <g shape-rendering="auto"><ellipse cx="577" cy="1147" rx="27" ry="27"/><ellipse cx="577" cy="1147" rx="19" ry="19"/><path d="M571 1132h12v30h-12zM577 1128v38"/></g>
     <path d="M295 136L226 155M586 508L553 543M730 500L662 640M176 817L226 808M312 796L252 738M508 794L455 730M494 892L480 932M820 930L760 944M797 1066L748 1084M822 1256L684 1314M170 1342L224 1362M448 1441L462 1322"/>
     <path d="M226 155l12-7v9zM553 543l5-12 7 8zM480 932l-2-12 8 2zM760 944l12-7v9zM224 1362l-12-9-2 8zM462 1322l-5 12h7z" fill="#fff"/>
    </g>
    <!-- end view -->
    <g class="ln" transform="translate(930 300) scale(.33333 .37)" >
     <path d="M199 52H242V207H199ZM199 55H242M199 90H242M199 125H242M199 161H242M199 198H242M199 202H242M199 205H242"/>
     <path d="M197 209H245V1277H197ZM205 209V1277M208 209V1277M211 209V1277M229 209V1277M233 209V1277M239 209V1277M197 861H245M197 879H245M197 1236H245M197 1255H245M233 909H245"/>
     <path d="M202 865h10v10h-10zM226 865h10v10h-10zM202 1241h10v10h-10zM226 1241h10v10h-10zM222 1050h7v35h-7z" fill="#fff"/>
     <path d="M272 507H296V696H272L245 580ZM290 507V696M246 590L268 516M248 586L272 516M252 600L262 580H272V620H256M246 640L260 630L272 696M222 595H245V718H222Z"/>
     <path class="heavy" d="M248 580L271 514M293 508V695M244 640L262 634"/>
     <path d="M232 600h18v30h-18zM228 640h18v40h-18zM240 620h18v24h-18z" fill="#fff"/>
     <path d="M245 858H600V902H245ZM245 870H597M245 874H597M245 889H597M245 894H597M490 848L600 858M490 848V858M490 852L560 856M502 850L590 858"/>
     <path d="M245 902H289V1352H245ZM252 902V1344M256 902V1344M278 902V1344M283 902V1344M245 1345H289M490 902H538V1352H490ZM499 902V1344M502 902V1344M505 902V1344M526 902V1344M531 902V1344M490 1345H538"/>
     <path d="M289 907H415V1006M289 909H415M289 1006H490M421 902V934H490M538 934H596V902M448 906H568M596 922L622 928L600 930"/>
     <path d="M289 1223H490M289 1226H490M289 1236H490M289 1246H490M289 1252H490M289 1267H490M289 1271H490M289 1277H490"/>
     <path d="M234 1370L260 1354H272V1370H234ZM480 1370L506 1354H520V1370H480ZM253 1372h28v11h-28zM502 1372h28v11h-28z"/>
     <path d="M238 1369l20-12h12v12zM484 1369l22-12h12v12z" fill="#fff"/>
     <path d="M108 209H192M124 209V787M124 806V1382M108 1382H250M538 1382H704M600 858H704M689 858V1112M689 1132V1382M617 922V1145M617 1164V1382M245 1352V1440M538 1352V1440M245 1428H376M402 1428H538"/>
     <path d="M124 211l-3 9h6zM124 1381l-3-9h6zM689 860l-3 9h6zM689 1381l-3-9h6zM617 924l-3 9h6zM617 1381l-3-9h6zM246 1428l9-3v6zM537 1428l-9-3v6z" fill="#fff"/>
     <path d="M386 745L354 858M442 788L404 868M407 1342L392 1278"/><path d="M354 858l-1-12h7zM392 1278l6 10h-7z" fill="#fff"/>
    </g>
    <!-- front view -->
    <g class="ln" transform="translate(1190 300) scale(.33333 .37)">
     <path d="M700 52H740V207H700ZM700 55H740M700 90H740M700 125H740M700 161H740M700 198H740M700 203H740M740 210L700 232M728 210L700 222M720 207V218"/>
     <path d="M673 207H698V507M673 207V507M682 207V507M689 207V507M673 696V858M682 696V858M689 696V858M698 696V858M648 696L673 718M656 696L673 710"/>
     <path d="M124 507H767V696H124ZM446 507V696M134 516H437V686H134ZM137 519H434M457 517H758V686H457ZM760 517V686M136 516V686M434 516V686"/>
     <path d="M278 687h18v8h-18zM598 687h18v8h-18zM436 687h9v8h-9zM758 687h9v8h-9z" fill="#fff"/>
     <path d="M166 858H698V902H166ZM191 870H673M191 874H673M191 880H673M191 887H673M191 893H673M191 858V902M673 858V902M166 902V1352H191V902M175 902V1345M179 902V1345M182 902V1345M673 902V1352H698V902M682 902V1345M689 902V1345M166 1345H191M673 1345H698"/>
     <path d="M248 934V882H264M604 882H620V934M617 884V934M255 926H612M255 929H612M255 932H612M302 924V916H316Q314 907 322 907H560M302 922H566V916H400M630 920V934M624 927H636M472 917H510"/>
     <path d="M314 934V1227H668V907H560M318 1227H664M666 907V1222M670 935V960M670 1175V1200M348 1211h5v5h-5zM627 1211h5v5h-5zM348 930h5v5h-5z"/>
     <path d="M197 1222V1015Q197 1007 205 1007H288Q296 1007 296 1015V1222M207 1015H290V1043H207ZM207 1020H285M207 1030H285M226 1047H290V1072H226ZM226 1055H285M226 1064H285M207 1043V1100Q207 1113 218 1113H280Q290 1113 290 1100V1072M200 1113L208 1130V1160L200 1190V1222M293 1113L285 1130V1160L293 1190V1222M215 1183H280M210 1195H285M207 1202H285M207 1209H285M207 1215H285M207 1220H285"/>
     <path d="M216 1101h5v5h-5zM225 1101h5v5h-5zM250 1099h6v8h-6zM260 1099h6v8h-6zM243 1135h9v7h-9zM698 905h6v14h-6zM698 1260h7v14h-7z" fill="#fff"/>
     <path d="M191 1223H304V1236M191 1236H673M191 1242H673M191 1250H673M191 1267H673M191 1271H673M191 1274H673M191 1277H673"/>
     <path d="M698 858H757V898H698M704 850H752V858M718 863V880Q718 889 728 889Q738 889 738 880V863ZM718 850h22v6h-22z"/>
     <path d="M171 1354h16v8h-4v8h12v14h-30v-14h10v-8h-4zM678 1354h16v8h-4v8h12v14h-31v-14h10v-8h-3z" fill="#fff"/><path d="M170 1374H190V1381H170ZM676 1374H696V1381H676Z" fill="#21272e" stroke="#21272e"/>
     <path d="M166 1385V1440M698 1385V1440M166 1428H418M444 1428H698M336 820L390 914M484 823L503 868M118 880H165M777 866L757 877M744 942L727 900M126 1112L208 1130M124 1342L166 1350M113 1385L166 1376M603 1310L609 1278"/>
     <path d="M503 868l-7-8 6-3zM165 880l-9-4v8zM757 877l8-8 2 7zM727 900l1 10 6-3zM166 1350l-9-5v7zM166 1376l-10-1v6zM609 1278l-5 9h8zM167 1428l9-3v6zM697 1428l-9-3v6z" fill="#fff"/>
    </g>
    <g>
     <circle cx="645" cy="345" r="7"/><circle cx="740" cy="469" r="7"/><circle cx="786" cy="465" r="7"/><circle cx="801" cy="465" r="7"/><circle cx="591" cy="582" r="7"/><circle cx="648" cy="580" r="7"/><circle cx="712" cy="580" r="7"/><circle cx="707" cy="600" r="7"/><circle cx="820" cy="619" r="7"/><circle cx="812" cy="664" r="7"/><circle cx="820" cy="730" r="7"/><circle cx="590" cy="759" r="7"/><circle cx="688" cy="803" r="7"/>
     <circle cx="1060" cy="569" r="7"/><circle cx="1081" cy="584" r="7"/><circle cx="1066" cy="803" r="7"/>
     <circle cx="1285" cy="597" r="7"/><circle cx="1299" cy="597" r="7"/><circle cx="1349" cy="597" r="7"/><circle cx="1222" cy="626" r="7"/><circle cx="1456" cy="619" r="7"/><circle cx="1440" cy="656" r="7"/><circle cx="1225" cy="710" r="7"/><circle cx="1224" cy="795" r="7"/><circle cx="1221" cy="813" r="7"/><circle cx="1390" cy="792" r="7"/>
     <path shape-rendering="crispEdges" d="M364 968V1018H415M360 1014h8v8h-8z"/>
    </g>
    <g class="mid">
     <text x="645" y="347">20</text><text x="740" y="471">25</text><text x="786" y="467">18</text><text x="801" y="467">19</text><text x="591" y="584">7</text><text x="648" y="582">13</text><text x="712" y="582">16</text><text x="707" y="602">6</text><text x="820" y="621">22</text><text x="812" y="666">1</text><text x="820" y="732">17</text><text x="590" y="761">14</text><text x="688" y="805">11</text>
     <text x="1060" y="571">15</text><text x="1081" y="586">5</text><text x="1066" y="805">4</text><text x="970" y="597">88 9/16</text><text x="1159" y="717">39 3/4</text><text x="1135" y="729">34 15/16</text><text x="1060" y="831">20</text>
     <text x="1285" y="599">23</text><text x="1299" y="599">26</text><text x="1349" y="599">2</text><text x="1222" y="628">22</text><text x="1456" y="621">10</text><text x="1440" y="658">21</text><text x="1225" y="712">24</text><text x="1224" y="797">8</text><text x="1221" y="815">9</text><text x="1390" y="794">3</text><text x="1333" y="831">36</text>
    </g>
    <text class="vname" x="696" y="871">BACK VIEW</text><text class="vname" x="1062" y="861">END VIEW</text><text class="vname" x="1333" y="871">FRONT VIEW</text>
    <text class="axis" x="367" y="965">Y</text><text class="axis" x="420" y="1017">X</text>
    <g><text x="1507" y="309">COMPUTER WORK STATION SPECIFICATIONS:</text><text x="1507" y="317">WIDTH:</text><text x="1536" y="317">38</text><text x="1507" y="324">DEPTH:</text><text x="1535" y="324">24</text><text x="1507" y="332">HEIGHT: 40 TO WORK SURFACE</text><text x="1507" y="339">HEIGHT: 35 TO KEYBOARD</text><text x="1507" y="347">INCLUDES PROVISIONS FOR:</text><text x="1516" y="354">- MULTIPLE MONITORS</text><text x="1516" y="362">- MULTIPLE COMPUTER TOWERS</text></g>
    <g><text x="799" y="905">NOTES:</text><text x="799" y="912">1.</text><text x="809" y="912">SIMPLIFIED KEYBOARD DRAWER SHOWN.</text><text x="799" y="920">2.</text><text x="809" y="920">PROVISIONS FOR ONE COMPUTER AS SHOWN.</text><text x="799" y="928">3.</text><text x="809" y="928">SECOND COMPUTER TRAY TO BE DEVELOPED AS NEEDED.</text><text x="799" y="936">4.</text><text x="809" y="936">HOFFMAN PART NUMBER TO VERIFIED WITH VENDOR</text><text x="809" y="943">NEEDS CUSTOMIZATION FOR WELDED MOUNTING TABS.</text><text x="799" y="951">5.</text><text x="809" y="951">MISCELLANEOUS BOLTS AND ASSEMBLY HARDWARE</text><text x="809" y="959">NOT INCLUDED IN PARTS LIST.</text></g>
    <text class="wm" x="580" y="564"><tspan class="han">莫西网</tspan>www.3dmox.com</text>
   </svg>
   <div class="viewlabel">[−][Top][2D Wireframe]</div>
   <div class="mdi d-flex"><button aria-label="Minimize drawing"><svg width="12" height="12" viewBox="0 0 12 12"><path d="M1 8h10v2H1z" fill="#fff" stroke="#fff"/></svg></button><button aria-label="Restore drawing"><svg width="12" height="12" viewBox="0 0 12 12"><path d="M2 4h6v6H2zM4 1h7v7" stroke="#fff" stroke-width="2"/></svg></button><button aria-label="Close drawing window"><svg width="12" height="12" viewBox="0 0 12 12"><path d="M2 2l8 8M10 2l-8 8" stroke="#fff" stroke-width="3"/></svg></button></div>
   <div class="navbar3d"><svg width="32" height="278" viewBox="0 0 32 278"><circle cx="26" cy="6" r="3"/><circle cx="16" cy="30" r="11"/><path d="M8 24l9-4 8 5v9l-8 6-9-5zM8 24l9 5 8-4M17 29v11"/><circle cx="16" cy="58" r="11"/><circle cx="16" cy="58" r="5"/><path d="M14 78h4M14 149h4M14 186h4M14 224h4" stroke-width="2"/><path d="M8 102l3-3 2 3v-8l3-3v-3l3 2 3 1 2 4-1 10-4 8h-7zM16 90v8M20 90v8"/><path d="M6 118l12 12M18 118L6 132M4 118h4M4 132h4"/><circle cx="22" cy="133" r="5"/><path d="M16 157v22M6 167h20M10 163q6-5 12 0v8q-6 4-12 0z"/><path d="M8 195h16v14H8zM6 214h20M8 198h16M8 202h16M10 209v5"/><path d="M5 236h22v6H5zM5 245h16v14H5zM10 248l5 4-5 4zM10 236v6M16 236v6M22 236v6"/><circle cx="26" cy="272" r="3"/></svg></div>
   <table class="parts"><colgroup><col style="width:15px"><col style="width:17px"><col style="width:54px"><col style="width:116px"><col style="width:32px"><col style="width:36px"></colgroup><tbody>
<tr><td>1</td><td>26</td><td>Keyboard</td><td></td><td></td><td></td></tr>
<tr><td>2</td><td>25</td><td>MONITOR</td><td>VESA 100MM MOUNT</td><td></td><td></td></tr>
<tr><td>1</td><td>24</td><td>PC</td><td></td><td></td><td></td></tr>
<tr><td>1</td><td>23</td><td>KD2414</td><td>DRAWER ASSY VERSATABLES #</td><td></td><td></td></tr>
<tr><td>4</td><td>22</td><td>12281</td><td>PUSH IN END CAP 8020#</td><td></td><td></td></tr>
<tr><td>1</td><td>21</td><td>SHT6687-010C</td><td>PUSH BUTTON MOUNT</td><td>Steel</td><td>4.000 in</td></tr>
<tr><td>1</td><td>20</td><td>TBD</td><td>AB LIGHT STACK</td><td></td><td></td></tr>
<tr><td>2</td><td>19</td><td>SHT6687-010B</td><td>VESA MONITOR MOUNT</td><td>Steel</td><td>4.250 in</td></tr>
<tr><td>2</td><td>18</td><td>40-4341</td><td>4 HOLE TEE PLATE 8020#</td><td>Aluminum</td><td></td></tr>
<tr><td>1</td><td>17</td><td>SHT6687-010A</td><td>COMPUTER TRAY</td><td>Steel</td><td>20.000 in</td></tr>
<tr><td>1</td><td>16</td><td>EXT6687-010H</td><td>MONITOR MOUNT</td><td>Aluminum</td><td>28.000 in</td></tr>
<tr><td>1</td><td>15</td><td>PLT6687-010A</td><td>WORK SURFACE</td><td>Aluminum</td><td>1"</td></tr>
<tr><td>2</td><td>14</td><td>40-4306</td><td>3 HOLE JOINING PLATE 8020#</td><td>Aluminum</td><td></td></tr>
<tr><td>4</td><td>13</td><td>40-4336</td><td>4 HOLE INSIDE GUSSET 8020#</td><td>Aluminum</td><td></td></tr>
<tr><td>20</td><td>12</td><td>33450</td><td>INSIDE CORNER CONN. 8020#</td><td></td><td></td></tr>
<tr><td>1</td><td>11</td><td>A24N2412LP</td><td>JUNCTION BOX HOFFMAN#</td><td></td><td></td></tr>
<tr><td>1</td><td>10</td><td>ABPPH080</td><td>PUSH BUTTON STATION</td><td></td><td></td></tr>
<tr><td>4</td><td>9</td><td>65-2206</td><td>ANTI VIBRATION MOUNT 8020#</td><td></td><td></td></tr>
<tr><td>4</td><td>8</td><td>40-2135</td><td>BASE PLATE 8020#</td><td>Aluminum</td><td></td></tr>
<tr><td>1</td><td>7</td><td>EXT6687-010G</td><td>INDICATOR MAST</td><td>Aluminum</td><td>80.563 in</td></tr>
<tr><td>1</td><td>6</td><td>EXT6687-010E</td><td>TOP SUPPORT LENGTH</td><td>Aluminum</td><td>32.850 in</td></tr>
<tr><td>2</td><td>5</td><td>EXT6687-010D</td><td>TOP SUPPORT WIDTH</td><td>Aluminum</td><td>24.000 in</td></tr>
<tr><td>2</td><td>4</td><td>EXT6687-010C</td><td>LEG SUPPORT WIDTH</td><td>Aluminum</td><td>13.701 in</td></tr>
<tr><td>2</td><td>3</td><td>EXT6687-010B</td><td>LEG SUPPORT LENGTH</td><td>Aluminum</td><td>32.850 in</td></tr>
<tr><td>2</td><td>2</td><td>EXT6687-010F</td><td>KEYBOARD SUPPORT</td><td>Aluminum</td><td>32.850 in</td></tr>
<tr><td>4</td><td>1</td><td>EXT6687-010A</td><td>LEG</td><td>Aluminum</td><td>33.413 in</td></tr>
</tbody><tfoot><tr><th>QTY</th><th>ITEM</th><th>PART NUMBER</th><th>DESCRIPTION</th><th>MATERIAL</th><th>LENGTH</th></tr><tr><th colspan="6">PARTS LIST</th></tr></tfoot></table>
   <div class="cmd d-flex align-items-stretch"><div class="cmd-l d-flex align-items-center justify-content-around"><span class="grip pale"></span><button aria-label="Close command line"><svg width="11" height="11" viewBox="0 0 11 11"><path d="M2 1l7 9M9 1l-7 9" stroke="#ddd" stroke-width="2"/></svg></button><button aria-label="Customize"><svg width="16" height="16" viewBox="0 0 16 16"><path d="M2 2q-1 4 3 5l7 8 2-2-7-7q1-4-3-5l2 3-2 1z" stroke="#ddd"/></svg></button></div><button class="d-flex align-items-center gap-1 px-1" aria-label="Recent commands"><svg width="16" height="14" viewBox="0 0 16 14"><path d="M1 1h14v12H1z" fill="#aaa" stroke="#777"/><path d="M3 4l4 3-4 3M9 10h4" stroke="#444" stroke-width="1.5"/></svg><span class="dn"></span></button><input type="text" placeholder="Type a command" aria-label="Command"><span class="up align-self-center me-1"></span></div>
  </div>
  <div class="hscroll d-flex align-items-center justify-content-between px-1"><svg width="6" height="8" viewBox="0 0 6 8"><path d="M5 1v6L1 4z" fill="#222" stroke="none"/></svg><span class="thumb"></span><svg width="6" height="8" viewBox="0 0 6 8"><path d="M1 1v6l4-3z" fill="#222" stroke="none"/></svg></div>
 </div>
 <div class="vscroll d-flex flex-column align-items-center justify-content-between py-1"><span class="up mt-1"></span><span class="thumb"></span><span class="dn mb-4"></span></div>
</main>
<footer class="status d-flex">
 <span class="coords">283.8617, 136.0735, 0.0000</span>
 <button aria-label="Infer"><svg class="ic" viewBox="0 0 18 18"><path d="M2 7h12M8 1v13M5 4h6v6H5z"/></svg></button><button aria-label="Snap"><svg class="ic" viewBox="0 0 18 18"><path d="M3 3v12h9V9H5" stroke="#777"/></svg></button><button aria-label="Polar"><svg class="ic" viewBox="0 0 18 18"><circle cx="8" cy="10" r="5"/><path d="M8 10l8-7M8 10h8"/></svg></button><button class="on" aria-label="Object snap"><svg class="ic" viewBox="0 0 18 18"><path d="M4 4h12v14H4z" fill="#fff"/><circle cx="4" cy="4" r="2" stroke="#d62"/></svg></button><button aria-label="3D object snap"><svg class="ic" viewBox="0 0 18 18"><path d="M4 5l4-3h8v11l-3 3H4z" fill="#fff"/><circle cx="4" cy="15" r="2" stroke="#d62"/></svg></button><button class="on" aria-label="Tracking"><svg class="ic" viewBox="0 0 18 18"><path d="M13 2L4 14h12" stroke-width="1.5"/></svg></button><button class="on" aria-label="Dynamic UCS"><svg class="ic" viewBox="0 0 18 18"><path d="M4 2v13h12M4 15L14 5"/><path d="M14 2l-4 5h4l-3 5" stroke="#e7a812" stroke-width="2"/></svg></button><button aria-label="Dynamic input"><svg class="ic" viewBox="0 0 18 18"><path d="M2 7h10M7 2v10M9 10h6v4H9z" stroke="#000"/></svg></button><button aria-label="Lineweight"><svg class="ic" viewBox="0 0 18 18"><path d="M2 10h14M9 3v12" stroke="#000" stroke-width="2"/></svg></button><button class="on" aria-label="Transparency"><svg class="ic" viewBox="0 0 18 18"><path d="M2 2h14v14H2z" fill="#8abde8" stroke="#2b77c0"/><path d="M2 2l14 14M16 2L2 16M9 2l7 7-7 7-7-7z" stroke="#fff" stroke-dasharray="2 1"/></svg></button><button aria-label="Quick properties"><svg class="ic" viewBox="0 0 18 18"><path d="M5 4h8v11H5zM7 7h4M7 10h4M7 12h4" stroke="#000"/></svg></button><button aria-label="Selection cycling"><svg class="ic" viewBox="0 0 18 18"><path d="M1 4h8M5 1v8"/><path d="M7 7h7v7H7zM10 10h7v7h-7z" fill="#8cc878"/></svg></button><button aria-label="Annotation monitor"><svg class="ic" viewBox="0 0 18 18"><path d="M7 2h4v5h5v4h-5v6H7v-6H2V7h5z" fill="#ddd"/></svg></button><button class="word">STRUCT</button>
 <div class="ms-auto d-flex"><button class="word">MODEL</button><button aria-label="Model space"><svg class="ic" viewBox="0 0 18 18"><path d="M3 4h12v12H3z" fill="#234"/><path d="M6 8h9v8H6z" fill="#ddd"/></svg></button><button aria-label="Layout one"><svg class="ic" viewBox="0 0 18 18"><path d="M3 4h12v12H3z"/><path d="M5 6l7 7M5 6v5"/></svg></button><button aria-label="Layout two"><svg class="ic" viewBox="0 0 18 18"><path d="M4 3h8l3 3v10H4z" fill="#ddd"/></svg></button><button class="me-4" aria-label="Quick view"><svg class="ic" viewBox="0 0 18 18"><path d="M2 4h6v7H2zM10 4h6v7h-6zM2 14h14" fill="#ddd"/></svg></button>
 <button aria-label="Workspace"><svg class="ic" viewBox="0 0 18 18"><circle cx="9" cy="9" r="6" stroke-dasharray="3 2" stroke-width="2"/><circle cx="9" cy="9" r="4" fill="#eee"/></svg></button><button aria-label="Lock"><svg class="ic" viewBox="0 0 18 18"><path d="M3 8h8v8H3z" fill="#ddd"/><path d="M10 8V5a3 3 0 0 1 6 0v3"/></svg></button><button aria-label="Hardware"><svg class="ic" viewBox="0 0 18 18"><circle cx="9" cy="9" r="6" fill="#777"/></svg></button><button class="on" aria-label="Isolate"><svg class="ic" viewBox="0 0 18 18"><path d="M2 3h14v13H2z" fill="#f3d326"/><path d="M4 9l5-4v3h5v3H9v3z" fill="#135"/></svg></button><button aria-label="Lock tray"><svg class="ic" viewBox="0 0 18 18"><path d="M3 3h11v12H3z" fill="#ddd"/><path d="M8 9h8v6H8z" fill="#f0b63a"/></svg></button><button aria-label="Plot tray"><svg class="ic" viewBox="0 0 18 18"><path d="M3 5h12v9H3z" fill="#7cb2e0"/><path d="M7 9l4 6 4-8" fill="#e9a83a"/></svg></button><button class="me-2" aria-label="Tips"><svg class="ic" viewBox="0 0 18 18"><path d="M7 13c0-3-3-4-3-7a5 5 0 0 1 10 0c0 3-3 4-3 7z" fill="#fff4b0"/></svg></button></div>
</footer>
<script src="https://cdn.jsdelivr.net/npm/bootstrap@5.3.0/dist/js/bootstrap.bundle.min.js"></script>
</body>
</html>
